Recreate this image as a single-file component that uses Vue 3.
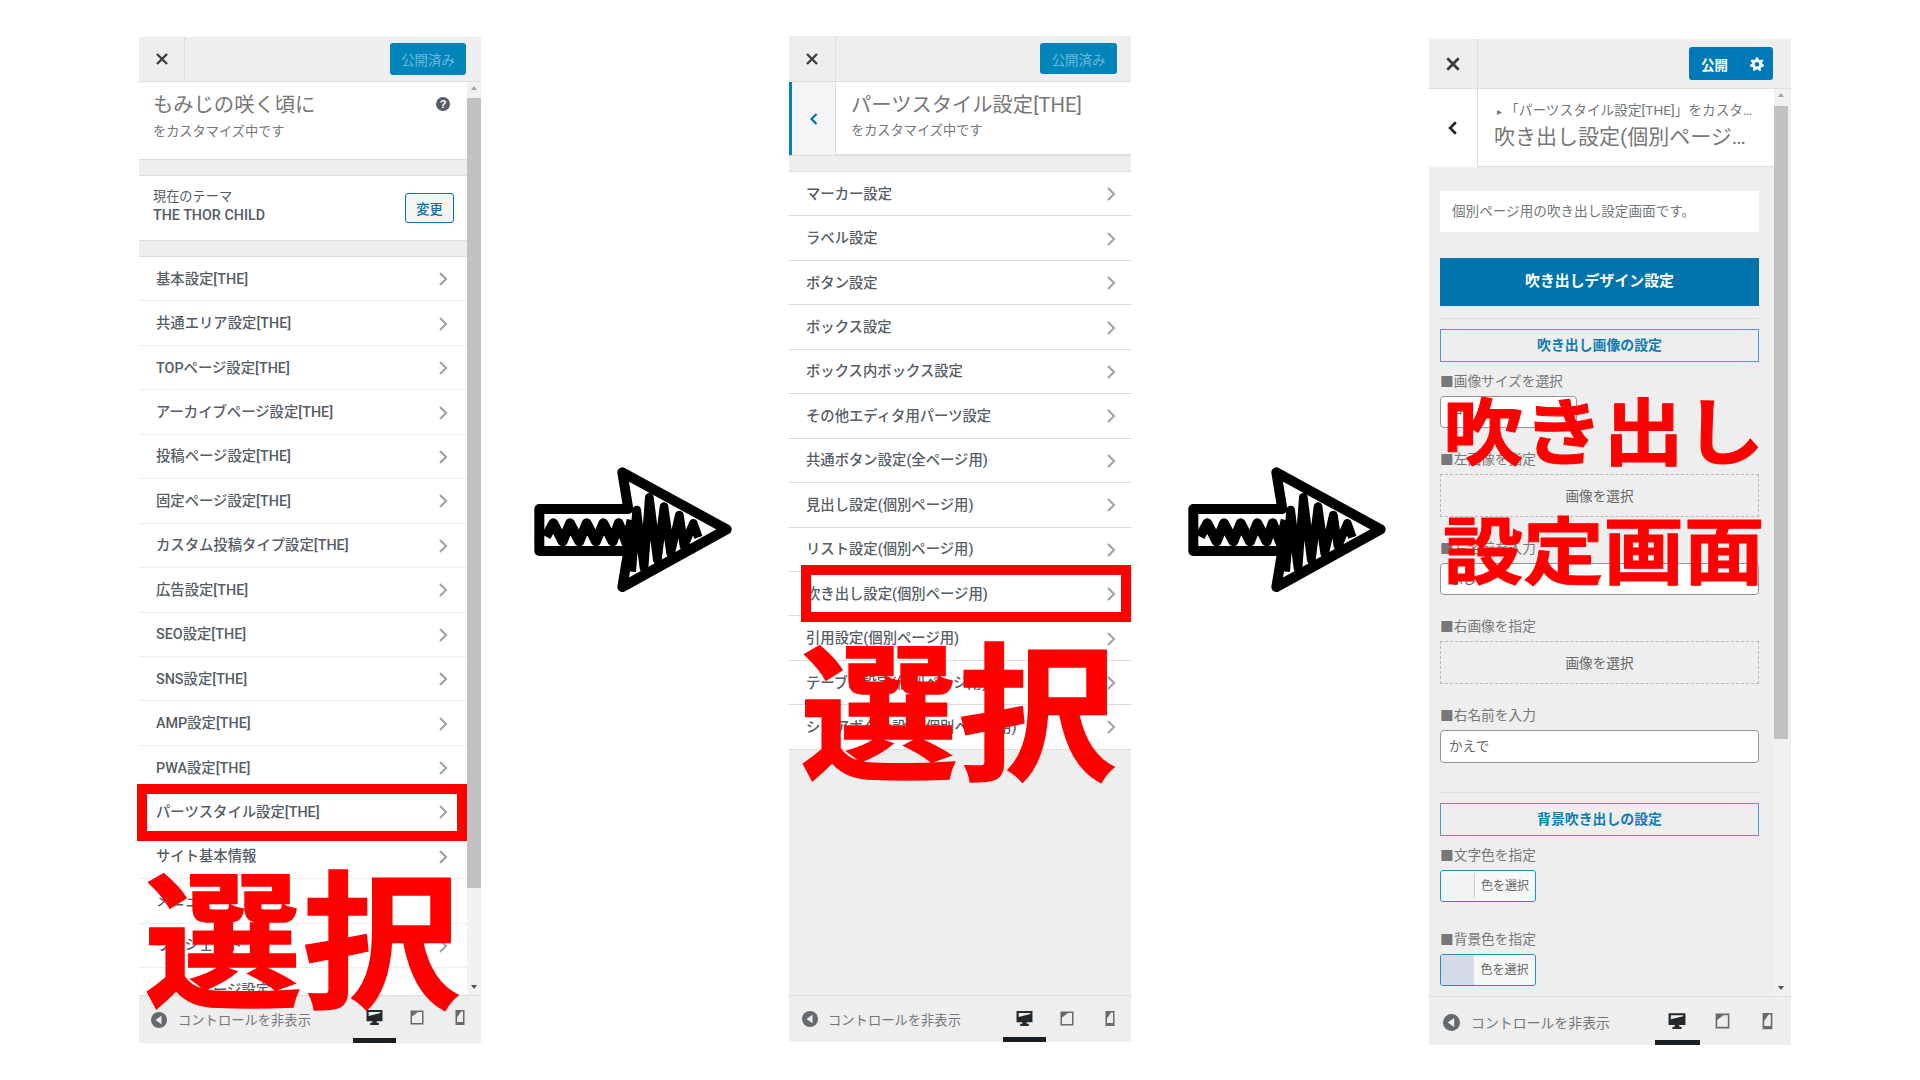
<script setup>
const rows1 = ['基本設定[THE]','共通エリア設定[THE]','TOPページ設定[THE]','アーカイブページ設定[THE]','投稿ページ設定[THE]','固定ページ設定[THE]','カスタム投稿タイプ設定[THE]','広告設定[THE]','SEO設定[THE]','SNS設定[THE]','AMP設定[THE]','PWA設定[THE]','パーツスタイル設定[THE]','サイト基本情報','メニュー','ウィジェット','ホームページ設定']
const rows2 = ['マーカー設定','ラベル設定','ボタン設定','ボックス設定','ボックス内ボックス設定','その他エディタ用パーツ設定','共通ボタン設定(全ページ用)','見出し設定(個別ページ用)','リスト設定(個別ページ用)','吹き出し設定(個別ページ用)','引用設定(個別ページ用)','テーブル設定(個別ページ用)','シェアボタン設定(個別ページ用)']
const hatchBody = 'M78 290 L100 250 L128 304 L150 250 L178 304 L200 250 L228 304 L250 250 L278 304 L296 250 L320 310 L335 240'
const hatchHead = 'M335 395 L350 210 L372 385 L388 172 L412 360 L432 200 L452 340 L478 225 L492 318 L520 250 L535 292'
</script>

<template>
  <div class="page">
    <section class="panel p1">
      <header class="bar">
        <div class="close">
          <svg width="14" height="14" viewBox="0 0 14 14"><path d="M2 2 L12 12 M12 2 L2 12" /></svg>
        </div>
        <button class="pub muted">公開済み</button>
      </header>
      <div class="scroller">
        <div class="content">
          <div class="intro">
            <div class="big">もみじの咲く頃に</div>
            <div class="sub">をカスタマイズ中です</div>
            <span class="help">?</span>
          </div>
          <div class="band"></div>
          <div class="theme">
            <div class="theme-txt">
              <div>現在のテーマ</div>
              <div class="theme-name">THE THOR CHILD</div>
            </div>
            <button class="change">変更</button>
          </div>
          <div class="band"></div>
          <div v-for="r in rows1" :key="r" class="row">
            <span>{{ r }}</span>
            <svg class="chev" width="12" height="16" viewBox="0 0 12 16"><path d="M3 2 L9 8 L3 14" /></svg>
          </div>
        </div>
        <div class="sbar">
          <i class="tri up"></i>
          <div class="thumb t1"></div>
          <i class="tri down"></i>
        </div>
      </div>
      <footer class="foot">
        <svg class="toggle" width="16" height="16" viewBox="0 0 16 16"><circle cx="8" cy="8" r="8" /><path d="M10.5 3.8 V12.2 L4.5 8 Z" /></svg>
        <span class="foot-txt">コントロールを非表示</span>
        <div class="devs">
          <div class="dev on"><svg width="17" height="17" viewBox="0 0 16 16"><path d="M0.5 1 H15.5 V11.5 H10 V13 H12 V15 H4 V13 H6 V11.5 H0.5 Z M2.5 2.8 V6.5 L13.5 3.8 V2.8 Z" fill-rule="evenodd" /></svg></div>
          <div class="dev"><svg width="16" height="17" viewBox="0 0 16 16"><path d="M1.5 1 H14.5 V15 H1.5 Z M3 2.5 V13.5 H13 V2.5 H9 L3 7 Z" fill-rule="evenodd" /></svg></div>
          <div class="dev"><svg width="12" height="17" viewBox="0 0 12 16"><path d="M1.5 0.5 H10.5 V15.5 H1.5 Z M3 2 V12.5 H9 V2 H7 L3 8 Z" fill-rule="evenodd" /></svg></div>
        </div>
      </footer>
      <div class="mark m1"></div>
      <div class="shout s1">選択</div>
    </section>

    <svg class="arrow arrow-a" width="240" height="180" viewBox="0 0 720 540">
      <path class="hatch body" :d="hatchBody" />
      <path class="hatch" :d="hatchHead" />
      <path class="outline" d="M58 207 H325 L307 97 L620 268 L307 441 L325 333 H58 Z" />
    </svg>

    <section class="panel p2">
      <header class="bar">
        <div class="close">
          <svg width="14" height="14" viewBox="0 0 14 14"><path d="M2 2 L12 12 M12 2 L2 12" /></svg>
        </div>
        <button class="pub muted">公開済み</button>
      </header>
      <div class="scroller">
        <div class="content">
          <div class="section-head">
            <div class="back">
              <svg width="10" height="14" viewBox="0 0 10 14"><path d="M7.5 2 L2.5 7 L7.5 12" /></svg>
            </div>
            <div class="section-title">
              <div class="big">パーツスタイル設定[THE]</div>
              <div class="sub">をカスタマイズ中です</div>
            </div>
          </div>
          <div class="band"></div>
          <div v-for="r in rows2" :key="r" class="row">
            <span>{{ r }}</span>
            <svg class="chev" width="12" height="16" viewBox="0 0 12 16"><path d="M3 2 L9 8 L3 14" /></svg>
          </div>
        </div>
      </div>
      <footer class="foot">
        <svg class="toggle" width="16" height="16" viewBox="0 0 16 16"><circle cx="8" cy="8" r="8" /><path d="M10.5 3.8 V12.2 L4.5 8 Z" /></svg>
        <span class="foot-txt">コントロールを非表示</span>
        <div class="devs">
          <div class="dev on"><svg width="17" height="17" viewBox="0 0 16 16"><path d="M0.5 1 H15.5 V11.5 H10 V13 H12 V15 H4 V13 H6 V11.5 H0.5 Z M2.5 2.8 V6.5 L13.5 3.8 V2.8 Z" fill-rule="evenodd" /></svg></div>
          <div class="dev"><svg width="16" height="17" viewBox="0 0 16 16"><path d="M1.5 1 H14.5 V15 H1.5 Z M3 2.5 V13.5 H13 V2.5 H9 L3 7 Z" fill-rule="evenodd" /></svg></div>
          <div class="dev"><svg width="12" height="17" viewBox="0 0 12 16"><path d="M1.5 0.5 H10.5 V15.5 H1.5 Z M3 2 V12.5 H9 V2 H7 L3 8 Z" fill-rule="evenodd" /></svg></div>
        </div>
      </footer>
      <div class="mark m2"></div>
      <div class="shout s2">選択</div>
    </section>

    <svg class="arrow arrow-b" width="240" height="180" viewBox="0 0 720 540">
      <path class="hatch body" :d="hatchBody" />
      <path class="hatch" :d="hatchHead" />
      <path class="outline" d="M58 207 H325 L307 97 L620 268 L307 441 L325 333 H58 Z" />
    </svg>

    <section class="panel p3">
      <header class="bar">
        <div class="close">
          <svg width="16" height="16" viewBox="0 0 14 14"><path d="M2 2 L12 12 M12 2 L2 12" /></svg>
        </div>
        <div class="pub live">
          <span class="live-txt">公開</span>
          <svg class="gear" width="14" height="14" viewBox="0 0 24 24"><path d="M10 1 H14 L14.7 4.4 L17.6 5.6 L20.5 3.7 L23 7 L20.4 9.3 L21 12 L24 13 L23 17 L19.6 17 L18 19.6 L19.5 22.5 L16 24 L14 21.4 L10 21.4 L8 24 L4.5 22.5 L6 19.6 L4.4 17 L1 17 L0 13 L3 12 L3.6 9.3 L1 7 L3.5 3.7 L6.4 5.6 L9.3 4.4 Z M12 8.5 A4 4 0 1 0 12 16.5 A4 4 0 1 0 12 8.5 Z" fill-rule="evenodd" /></svg>
        </div>
      </header>
      <div class="scroller">
        <div class="content">
          <div class="section-head">
            <div class="back plain">
              <svg width="12" height="16" viewBox="0 0 10 14"><path d="M7.5 2 L2.5 7 L7.5 12" /></svg>
            </div>
            <div class="section-title">
              <div class="crumb"><span class="crumb-tri">▸</span>「パーツスタイル設定[THE]」をカスタマイズ中です</div>
              <div class="big clip">吹き出し設定(個別ページ用)</div>
            </div>
          </div>
          <div class="form">
            <div class="desc">個別ページ用の吹き出し設定画面です。</div>
            <div class="solid">吹き出しデザイン設定</div>
            <hr class="rule first" />
            <div class="outlined">吹き出し画像の設定</div>
            <div class="lab near">■画像サイズを選択</div>
            <div class="input small">中</div>
            <div class="lab">■左画像を指定</div>
            <div class="drop">画像を選択</div>
            <div class="lab">■左名前を入力</div>
            <div class="input">ふじ</div>
            <div class="lab">■右画像を指定</div>
            <div class="drop">画像を選択</div>
            <div class="lab">■右名前を入力</div>
            <div class="input tall">かえで</div>
            <hr class="rule second" />
            <div class="outlined">背景吹き出しの設定</div>
            <div class="lab near">■文字色を指定</div>
            <div class="color"><i class="swatch"></i><span>色を選択</span></div>
            <div class="lab wide">■背景色を指定</div>
            <div class="color"><i class="swatch tinted"></i><span>色を選択</span></div>
          </div>
        </div>
        <div class="sbar">
          <i class="tri up"></i>
          <div class="thumb t3"></div>
          <i class="tri down"></i>
        </div>
      </div>
      <footer class="foot">
        <svg class="toggle" width="17" height="17" viewBox="0 0 16 16"><circle cx="8" cy="8" r="8" /><path d="M10.5 3.8 V12.2 L4.5 8 Z" /></svg>
        <span class="foot-txt">コントロールを非表示</span>
        <div class="devs">
          <div class="dev on"><svg width="18" height="18" viewBox="0 0 16 16"><path d="M0.5 1 H15.5 V11.5 H10 V13 H12 V15 H4 V13 H6 V11.5 H0.5 Z M2.5 2.8 V6.5 L13.5 3.8 V2.8 Z" fill-rule="evenodd" /></svg></div>
          <div class="dev"><svg width="17" height="18" viewBox="0 0 16 16"><path d="M1.5 1 H14.5 V15 H1.5 Z M3 2.5 V13.5 H13 V2.5 H9 L3 7 Z" fill-rule="evenodd" /></svg></div>
          <div class="dev"><svg width="13" height="18" viewBox="0 0 12 16"><path d="M1.5 0.5 H10.5 V15.5 H1.5 Z M3 2 V12.5 H9 V2 H7 L3 8 Z" fill-rule="evenodd" /></svg></div>
        </div>
      </footer>
      <div class="shout s3">吹き出し</div>
      <div class="shout s4">設定画面</div>
    </section>
  </div>
</template>

<style>
html, body { margin: 0; background: #fff; }
</style>

<style scoped>
.page {
  width: 1920px;
  height: 1080px;
  display: flex;
  align-items: flex-start;
  overflow: hidden;
  background: #fff;
  font-family: Roboto, "Noto Sans CJK JP", sans-serif;
  color: #555d66;
}
.panel {
  position: relative;
  flex: none;
  display: flex;
  flex-direction: column;
  background: #eee;
  box-sizing: border-box;
}
.p1 { width: 342px; height: 1006px; margin: 37px 0 0 139px; }
.p2 { width: 342px; height: 1006px; margin: 36px 0 0 29px; }
.p3 { width: 362px; height: 1006px; margin: 39px 0 0 15px; }

.arrow { flex: none; margin-top: 440px; }
.arrow-a { margin-left: 39px; }
.arrow-b { margin-left: 43px; }
.outline { fill: none; stroke: #000; stroke-width: 30; stroke-linejoin: round; }
.hatch { fill: none; stroke: #000; stroke-width: 26; stroke-linejoin: round; }
.hatch.body { stroke-width: 30; }

.bar {
  flex: none;
  height: 44px;
  display: flex;
  align-items: center;
  justify-content: space-between;
  border-bottom: 1px solid #ddd;
}
.p2 .bar { height: 45px; }
.p3 .bar { height: 49px; }
.close {
  width: 46px;
  height: 100%;
  display: flex;
  align-items: center;
  justify-content: center;
  border-right: 1px solid #ddd;
  box-sizing: border-box;
}
.p2 .close { width: 47px; }
.p3 .close { width: 49px; }
.close svg path { fill: none; stroke: #3a3f44; stroke-width: 2.4; }
.pub {
  border: 0;
  border-radius: 3px;
  background: #0085ba;
  font-family: inherit;
  padding: 0;
  display: flex;
  align-items: center;
  justify-content: center;
}
.muted {
  width: 76px;
  height: 32px;
  margin-right: 15px;
  color: #6fb8d8;
  font-size: 13.4px;
}
.p2 .muted { width: 77px; height: 31px; margin-right: 14px; }
.live {
  width: 84px;
  height: 33px;
  margin-right: 18px;
  color: #fff;
  font-size: 13.4px;
  font-weight: 700;
  background: #0079b8;
  justify-content: flex-start;
  padding-left: 12px;
  box-sizing: border-box;
}
.live-txt { padding-right: 14px; border-right: 1px solid #0a6fa3; }
.gear { margin-left: 7px; }
.gear path { fill: #fff; }

.scroller { flex: 1; min-height: 0; display: flex; overflow: hidden; }
.content { flex: 1; min-width: 0; overflow: hidden; background: #eee; }
.sbar {
  flex: none;
  width: 14px;
  background: #f1f1f1;
  display: flex;
  flex-direction: column;
  align-items: center;
  padding-bottom: 6px;
  box-sizing: border-box;
}
.p3 .sbar { margin-right: 3px; }
.thumb { width: 100%; background: #c1c1c1; }
.t1 { height: 790px; margin-top: 8px; }
.t3 { height: 633px; margin-top: 9px; }
.tri { width: 0; height: 0; border-left: 3.5px solid transparent; border-right: 3.5px solid transparent; }
.tri.up { border-bottom: 4px solid #a3a3a3; margin-top: 4px; }
.tri.down { border-top: 4px solid #505050; margin-top: auto; }

.intro {
  position: relative;
  height: 77px;
  background: #fff;
  padding-left: 14px;
  box-sizing: border-box;
}
.big { font-size: 20.3px; line-height: 28px; color: #777; white-space: nowrap; padding-top: 9px; }
.sub { font-size: 13.2px; line-height: 18px; color: #72777c; margin-top: 4px; white-space: nowrap; }
.p2 .sub { margin-top: 3px; }
.help {
  position: absolute;
  right: 17px;
  top: 15px;
  width: 14px;
  height: 14px;
  border-radius: 50%;
  background: #555d66;
  color: #fff;
  font: 700 11px/14px "Liberation Sans", sans-serif;
  text-align: center;
}
.band {
  height: 15px;
  background: #eee;
  border-top: 1px solid #ddd;
  border-bottom: 1px solid #ddd;
}
.theme {
  height: 64px;
  background: #fff;
  display: flex;
  align-items: center;
  justify-content: space-between;
  padding: 0 13px 4px 14px;
  box-sizing: border-box;
}
.theme-txt { font-size: 13.2px; line-height: 18px; color: #555d66; white-space: nowrap; }
.theme-name { font-size: 14.3px; font-weight: 500; }
.change {
  width: 49px;
  height: 30px;
  margin-top: 4px;
  padding: 0;
  border: 1px solid #0073aa;
  border-radius: 3px;
  background: #f3f5f6;
  color: #0073aa;
  font: 500 13.2px "Noto Sans CJK JP", sans-serif;
}
.row {
  height: 44.45px;
  background: #fff;
  display: flex;
  align-items: center;
  justify-content: space-between;
  padding: 0 18px 3px 17px;
  border-bottom: 1.5px solid #eee;
  box-sizing: border-box;
  font-size: 14.35px;
  font-weight: 500;
  color: #555d66;
  white-space: nowrap;
}
.p2 .row { padding: 0 14px 3px 17px; border-bottom: 1px solid #ddd; }
.chev { margin-top: 4px; }
.chev path { fill: none; stroke: #a0a5aa; stroke-width: 2.2; }

.section-head { display: flex; background: #fff; height: 73px; }
.p3 .section-head { height: 78px; }
.back {
  flex: none;
  width: 47px;
  display: flex;
  align-items: center;
  justify-content: center;
  background: #f4f4f7;
  border-left: 3px solid #0085ba;
  border-right: 1px solid #ddd;
  box-sizing: border-box;
}
.back path { fill: none; stroke: #0073aa; stroke-width: 2.2; }
.back.plain { width: 49px; background: #fff; border-left: 0; }
.back.plain path { stroke: #23282d; stroke-width: 2.4; }
.section-title {
  flex: 1;
  min-width: 0;
  padding-left: 15px;
  border-bottom: 1px solid #ddd;
  box-sizing: border-box;
}
.p3 .section-title { padding: 10px 17px 0 16px; }
.crumb {
  font-size: 13.7px;
  line-height: 22px;
  color: #72777c;
  white-space: nowrap;
  overflow: hidden;
  text-overflow: ellipsis;
  margin-right: -7px;
}
.crumb-tri { font-size: 10px; margin: 0 3px 0 3px; }
.big.clip {
  font-size: 21px;
  padding: 0;
  margin-top: 0;
  overflow: hidden;
  text-overflow: ellipsis;
}

.form { padding: 24px 15px 0 11px; }
.desc {
  height: 41px;
  background: #fff;
  font-size: 13.6px;
  line-height: 40.5px;
  padding-left: 12px;
  color: #72777c;
}
.solid {
  height: 48px;
  margin-top: 26px;
  background: #0073aa;
  color: #fff;
  font-size: 14.9px;
  font-weight: 700;
  line-height: 47px;
  text-align: center;
}
.rule { border: 0; height: 1px; background: #ddd; margin: 0; }
.rule.first { margin-top: 12px; }
.rule.second { margin-top: 29px; }
.outlined {
  height: 33px;
  margin-top: 10px;
  border: 1.5px solid #4a9dc4;
  box-sizing: border-box;
  color: #0f7db0;
  font-size: 13.9px;
  font-weight: 700;
  line-height: 30.5px;
  text-align: center;
}
.lab { height: 18px; margin-top: 23px; font-size: 13.7px; line-height: 16.5px; color: #777; white-space: nowrap; }
.lab.near { margin-top: 11px; }
.lab.wide { margin-top: 29px; }
.input {
  height: 32px;
  margin-top: 5px;
  background: #fff;
  border: 1px solid #8d96a0;
  border-radius: 4px;
  box-sizing: border-box;
  font-size: 13.6px;
  line-height: 30px;
  padding-left: 8px;
  color: #666;
}
.input.small { width: 137px; }
.input.tall { height: 33px; }
.drop {
  height: 43px;
  margin-top: 5px;
  border: 1px dashed #b4b9be;
  box-sizing: border-box;
  font-size: 13.6px;
  line-height: 42.5px;
  text-align: center;
  color: #666;
}
.color {
  width: 96px;
  height: 32px;
  margin-top: 5px;
  display: flex;
  align-items: stretch;
  background: #f6f7f7;
  border: 1px solid #2e8ab8;
  border-radius: 3px;
  box-sizing: border-box;
  font-size: 12px;
  color: #666;
  overflow: hidden;
}
.swatch { width: 33px; flex: none; background: #f2f4f4; border-right: 1px solid #ccc; margin: 3px 0; }
.swatch.tinted { background: #d5dbe6; margin: 0; border-right: 0; }
.color span { flex: 1; text-align: center; line-height: 30.5px; white-space: nowrap; }

.foot {
  flex: none;
  height: 48px;
  display: flex;
  align-items: center;
  border-top: 1px solid #ddd;
  box-sizing: border-box;
  background: #eee;
}
.p2 .foot { height: 47px; }
.p3 .foot { height: 49px; }
.toggle { flex: none; margin-left: 12px; }
.p2 .toggle { margin-left: 13px; }
.p3 .toggle { margin-left: 14px; margin-top: 2px; }
.toggle circle { fill: #656a70; }
.toggle path { fill: #eee; }
.foot-txt { margin: -1px 0 0 11px; font-size: 13.3px; color: #72777c; white-space: nowrap; }
.p2 .foot-txt { margin: 0 0 0 10px; }
.p3 .foot-txt { margin: 2px 0 0 11px; font-size: 13.9px; }
.devs { margin-left: auto; height: 100%; display: flex; }
.p3 .devs { margin-right: 1.5px; }
.dev {
  width: 42.7px;
  height: 100%;
  display: flex;
  align-items: center;
  justify-content: center;
  box-sizing: border-box;
  border-bottom: 5px solid transparent;
  padding-top: 1px;
}
.p2 .dev { padding-top: 4px; }
.p3 .dev { width: 45px; padding-top: 4px; }
.dev svg path { fill: #656a70; }
.dev.on { border-bottom-color: #191e23; }
.dev.on svg path { fill: #23282d; }

.mark { position: absolute; border: 10px solid #f00; box-sizing: border-box; pointer-events: none; }
.m1 { left: -2px; top: 747px; width: 330px; height: 57px; }
.m2 { left: 12px; top: 529px; width: 330px; height: 57px; }
.shout {
  position: absolute;
  color: #f00;
  font-family: "Noto Sans CJK JP", sans-serif;
  font-weight: 700;
  line-height: 1;
  white-space: nowrap;
  pointer-events: none;
  transform-origin: left top;
}
.s1 { left: 5px; top: 821px; font-size: 148px; transform: scaleX(1.067); -webkit-text-stroke: 1.5px #f00; }
.s2 { left: 11px; top: 594px; font-size: 148px; transform: scaleX(1.067); -webkit-text-stroke: 1.5px #f00; }
.s3 { left: 14px; top: 352px; font-size: 73px; transform: scaleX(1.1); -webkit-text-stroke: 1px #f00; }
.s4 { left: 14px; top: 471px; font-size: 73px; transform: scaleX(1.1); -webkit-text-stroke: 1px #f00; }
</style>
